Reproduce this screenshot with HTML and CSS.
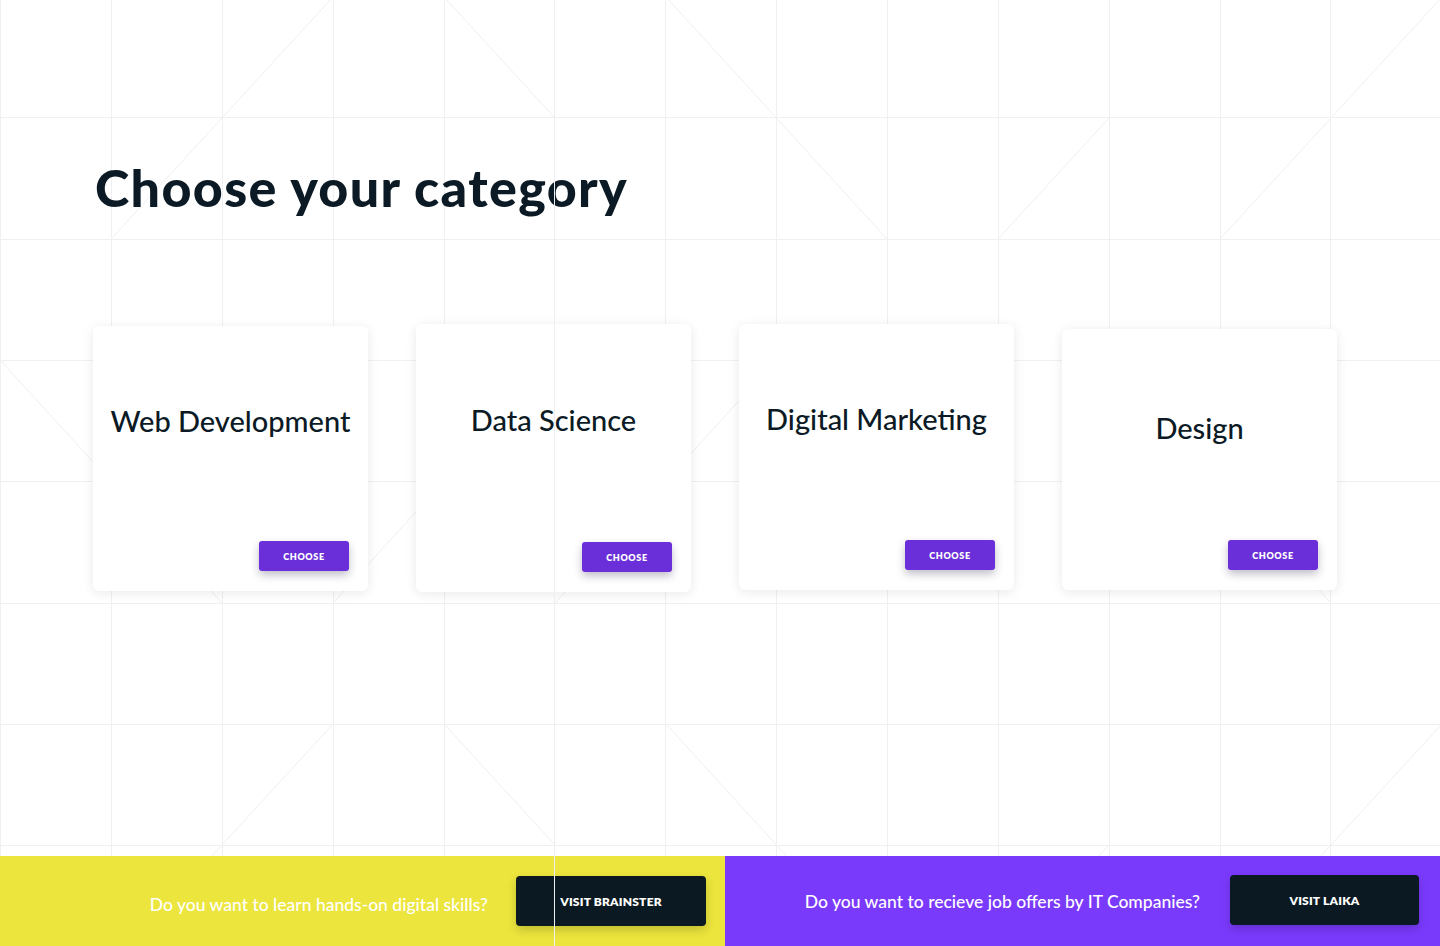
FILE: index.html
```html
<!DOCTYPE html>
<html lang="en">
<head>
<meta charset="utf-8">
<title>Choose your category</title>
<link rel="stylesheet" href="styles.css">
</head>
<body>
<div class="page">
  <svg class="pattern" width="1440" height="946" viewBox="0 0 1440 946" aria-hidden="true">
    <g class="pattern__grid" shape-rendering="crispEdges">
      <line x1="0.5" y1="0" x2="0.5" y2="946"/>
      <line x1="111.5" y1="0" x2="111.5" y2="946"/>
      <line x1="222.5" y1="0" x2="222.5" y2="946"/>
      <line x1="333.5" y1="0" x2="333.5" y2="946"/>
      <line x1="444.5" y1="0" x2="444.5" y2="946"/>
      <line x1="554.5" y1="0" x2="554.5" y2="946"/>
      <line x1="665.5" y1="0" x2="665.5" y2="946"/>
      <line x1="776.5" y1="0" x2="776.5" y2="946"/>
      <line x1="887.5" y1="0" x2="887.5" y2="946"/>
      <line x1="998.5" y1="0" x2="998.5" y2="946"/>
      <line x1="1109.5" y1="0" x2="1109.5" y2="946"/>
      <line x1="1220.5" y1="0" x2="1220.5" y2="946"/>
      <line x1="1330.5" y1="0" x2="1330.5" y2="946"/>
      <line x1="0" y1="117.5" x2="1440" y2="117.5"/>
      <line x1="0" y1="239.5" x2="1440" y2="239.5"/>
      <line x1="0" y1="360.5" x2="1440" y2="360.5"/>
      <line x1="0" y1="481.5" x2="1440" y2="481.5"/>
      <line x1="0" y1="603.5" x2="1440" y2="603.5"/>
      <line x1="0" y1="724.5" x2="1440" y2="724.5"/>
      <line x1="0" y1="845.5" x2="1440" y2="845.5"/>
    </g>
    <g class="pattern__diag">
      <line x1="333" y1="-3" x2="111" y2="239"/>
      <line x1="444" y1="-3" x2="555" y2="118"/>
      <line x1="666" y1="-3" x2="887" y2="239"/>
      <line x1="1109" y1="118" x2="998" y2="239"/>
      <line x1="1442" y1="-3" x2="1220" y2="239"/>
      <line x1="0" y1="360" x2="222" y2="603"/>
      <line x1="776" y1="360" x2="555" y2="603"/>
      <line x1="444" y1="481" x2="333" y2="603"/>
      <line x1="1220" y1="481" x2="1331" y2="603"/>
      <line x1="333" y1="724" x2="111" y2="966"/>
      <line x1="444" y1="724" x2="555" y2="845"/>
      <line x1="666" y1="724" x2="887" y2="966"/>
      <line x1="1109" y1="845" x2="998" y2="966"/>
      <line x1="1442" y1="724" x2="1220" y2="966"/>
    </g>
  </svg>

  <main class="content">
    <h1 class="title">Choose your category</h1>
    <div class="cards">
      <div class="card card--one">
        <h2 class="card__title">Web Development</h2>
        <a class="card__btn" href="#">CHOOSE</a>
      </div>
      <div class="card card--two">
        <h2 class="card__title">Data Science</h2>
        <a class="card__btn" href="#">CHOOSE</a>
      </div>
      <div class="card card--three">
        <h2 class="card__title">Digital Marketing</h2>
        <a class="card__btn" href="#">CHOOSE</a>
      </div>
      <div class="card card--four">
        <h2 class="card__title card__title--low">Design</h2>
        <a class="card__btn" href="#">CHOOSE</a>
      </div>
    </div>
  </main>

  <footer class="promo">
    <div class="promo__half promo__half--yellow">
      <p class="promo__text promo__text--low">Do you want to learn hands-on digital skills?</p>
      <a class="promo__btn" href="#">VISIT BRAINSTER</a>
    </div>
    <div class="promo__half promo__half--purple">
      <p class="promo__text">Do you want to recieve job offers by IT Companies?</p>
      <a class="promo__btn promo__btn--up" href="#">VISIT LAIKA</a>
    </div>
  </footer>

  <div class="center-line"></div>
</div>
</body>
</html>
```

FILE: styles.css
```css
* {
  box-sizing: border-box;
}

html, body {
  margin: 0;
  padding: 0;
  background: #ffffff;
}

body {
  font-family: "Lato", "Open Sans", sans-serif;
  color: #0b1a24;
}

.page {
  position: relative;
  width: 1440px;
  height: 946px;
  overflow: hidden;
  display: flex;
  flex-direction: column;
}

.pattern {
  position: absolute;
  left: 0;
  top: 0;
  z-index: 0;
}

.pattern__grid line {
  stroke: #f0f0f2;
  stroke-width: 1;
}

.pattern__diag line {
  stroke: #efeff1;
  stroke-width: 1;
}

.content {
  position: relative;
  z-index: 1;
  height: 856px;
  padding: 161px 0 0 93px;
}

.title {
  margin: 0 0 0 2px;
  font-size: 52px;
  line-height: 1;
  font-weight: 900;
  color: #0b1a24;
  letter-spacing: 1.35px;
}

.cards {
  display: flex;
  align-items: flex-start;
  gap: 48px;
  margin-top: 111px;
}

.card {
  width: 275px;
  height: 266px;
  background: #ffffff;
  border-radius: 6px;
  box-shadow: 0 2px 12px rgba(20, 20, 40, 0.09);
  display: flex;
  flex-direction: column;
  align-items: center;
}

.card--one {
  margin-top: 2px;
  height: 265px;
}

.card--two {
  height: 268px;
}

.card--three {
  height: 266px;
}

.card--four {
  margin-top: 5px;
  height: 261px;
}

.card__title {
  margin: 0;
  padding-top: 81px;
  font-size: 29px;
  line-height: 1;
  font-weight: 500;
  color: #0b1a24;
  white-space: nowrap;
}

.card--one .card__title {
  padding-top: 80px;
}

.card--three .card__title {
  padding-top: 80px;
}

.card__title--low {
  padding-top: 84px;
}

.card__btn {
  margin-top: auto;
  margin-bottom: 20px;
  margin-right: 19px;
  align-self: flex-end;
  width: 90px;
  height: 30px;
  display: flex;
  align-items: center;
  justify-content: center;
  background: #6a2fd8;
  color: #ffffff;
  border-radius: 3px;
  font-size: 9px;
  font-weight: 800;
  letter-spacing: 0.6px;
  text-decoration: none;
  box-shadow: 0 4px 8px rgba(30, 20, 60, 0.28);
}

.promo {
  position: relative;
  z-index: 2;
  height: 90px;
  display: flex;
}

.promo__half {
  display: flex;
  align-items: center;
  justify-content: flex-end;
  height: 100%;
}

.promo__half--yellow {
  width: 725px;
  background: #ece53d;
  padding-right: 19px;
  gap: 28px;
}

.promo__half--purple {
  flex: 1;
  background: #7a3afc;
  padding-right: 21px;
  gap: 30px;
}

.promo__text {
  margin: 0;
  color: #ffffff;
  font-size: 17.5px;
  font-weight: 500;
  white-space: nowrap;
}

.promo__text--low {
  margin-top: 6px;
}

.promo__btn {
  width: 190px;
  height: 50px;
  display: flex;
  align-items: center;
  justify-content: center;
  background: #0a1922;
  color: #ffffff;
  border-radius: 4px;
  font-size: 12px;
  font-weight: 800;
  letter-spacing: 0.2px;
  text-decoration: none;
  box-shadow: 0 4px 10px rgba(0, 0, 0, 0.18);
}

.promo__btn--up {
  margin-top: -2px;
  width: 189px;
}

.center-line {
  position: absolute;
  left: 554px;
  top: 0;
  width: 1px;
  height: 946px;
  background: #eeeff2;
  z-index: 3;
}
```
